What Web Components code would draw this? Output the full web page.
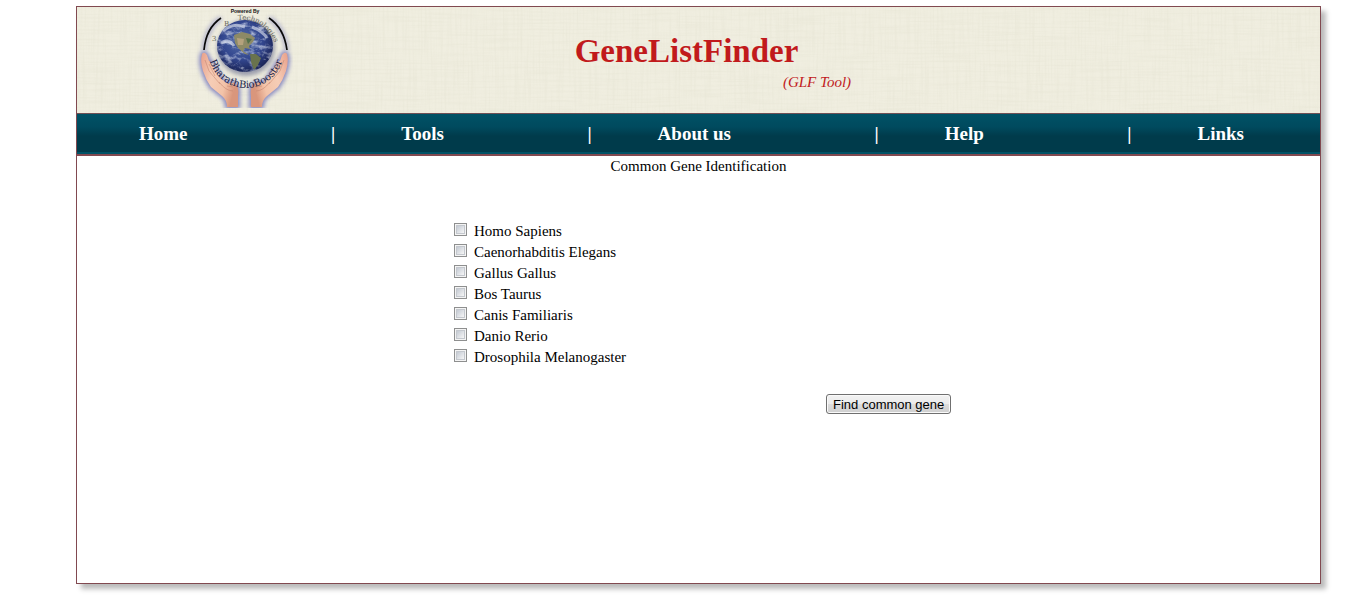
<!DOCTYPE html>
<html lang="en">
<head>
<meta charset="utf-8">
<title>GeneListFinder</title>
<style>
body { margin: 0; display: flow-root; min-height: 100vh; background: #fff; color: #000; font: 15px/21px "Liberation Serif", "Times New Roman", serif; }
</style>
</head>
<body>
<glf-frame>
  <glf-header slot="header"></glf-header>
  <glf-nav slot="nav"></glf-nav>
  <glf-form>
    <span slot="title">Common Gene Identification</span>
    <glf-option>Homo Sapiens</glf-option>
    <glf-option>Caenorhabditis Elegans</glf-option>
    <glf-option>Gallus Gallus</glf-option>
    <glf-option>Bos Taurus</glf-option>
    <glf-option>Canis Familiaris</glf-option>
    <glf-option>Danio Rerio</glf-option>
    <glf-option>Drosophila Melanogaster</glf-option>
  </glf-form>
</glf-frame>

<script>
function define(name, html) {
  customElements.define(name, class extends HTMLElement {
    constructor() {
      super();
      this.attachShadow({ mode: 'open' }).innerHTML = html;
    }
  });
}

define('glf-frame', `
<style>
:host { display: block; box-sizing: border-box; margin: 6px 44px 0 76px; min-height: calc(100vh - 35px);
  border: 1px solid #814950; background: #fff; box-shadow: 5px 5px 5px #bbb; }
</style>
<slot name="header"></slot><slot name="nav"></slot><main><slot></slot></main>`);

define('glf-logo', `
<style>:host { display: block; width: 98px; height: 101px; } svg { display: block; }</style>
<svg width="98" height="101" viewBox="195 7 98 101" role="img" aria-label="Bharath BioBooster">
  <defs>
    <radialGradient id="sea" cx=".45" cy=".4" r=".6">
      <stop offset="0" stop-color="#536da8"/><stop offset=".6" stop-color="#33478f"/><stop offset="1" stop-color="#1b2558"/>
    </radialGradient>
    <linearGradient id="skin" x1="0" x2="1" y1="0" y2=".4">
      <stop offset="0" stop-color="#e8a08a"/><stop offset=".4" stop-color="#f6cdb6"/><stop offset=".75" stop-color="#f3c3a8"/><stop offset="1" stop-color="#d9967c"/>
    </linearGradient>
    <filter id="glow" x="-30%" y="-30%" width="160%" height="160%"><feGaussianBlur stdDeviation="2"/></filter>
    <filter id="soft"><feGaussianBlur stdDeviation=".5"/></filter>
    <filter id="clouds" x="0" y="0" width="1" height="1">
      <feTurbulence type="fractalNoise" baseFrequency=".12 .2" numOctaves="4" seed="21"/>
      <feColorMatrix values="0 0 0 0 .8  0 0 0 0 .84  0 0 0 0 .93  3 0 0 0 -1.4"/>
    </filter>
    <clipPath id="disc"><ellipse cx="245" cy="46" rx="28" ry="26"/></clipPath>
    <path id="hand" d="M202 54Q204 51 207 55L209 61Q213 62 214 67L218 72Q220 78 224 81Q226 84 229 83Q234 81 237 86Q239 90 238 96V107H227Q227 100 222 96L211 87Q206 80 203 71Q200 61 202 54Z"/>
    <path id="low" d="M208 50A38 38 0 0 0 284 50"/>
    <path id="top" d="M238 20Q266 17 278 51"/>
  </defs>
  <g fill="#6064b6" stroke="#6064b6" stroke-width="4" opacity=".75" filter="url(#glow)">
    <use href="#hand"/><use href="#hand" transform="translate(489 0) scale(-1 1)"/>
  </g>
  <ellipse cx="246" cy="48" rx="29" ry="28" fill="#777b98" opacity=".7" filter="url(#glow)"/>
  <path d="M204 50Q206 28 221 18M269 18Q284 28 287 50" fill="none" stroke="#8a8cc0" stroke-width="5" opacity=".6" filter="url(#glow)"/>
  <path d="M204 50Q206 28 221 18M269 18Q284 28 287 50" fill="none" stroke="#090909" stroke-width="1.7"/>
  <ellipse cx="245" cy="46" rx="28" ry="26" fill="url(#sea)"/>
  <g clip-path="url(#disc)">
    <rect x="217" y="20" width="56" height="52" filter="url(#clouds)" opacity=".65"/>
    <g filter="url(#soft)">
      <path fill="#8d8a66" d="M234 35L242 32L250 34L255 38L253 42L249 46L250 49L245 48L243 51L249 55L245 54L238 48L235 43Z"/>
      <path fill="#69734d" d="M250 54L256 54L261 58L258 65L254 70L251 62Z"/>
      <path fill="#b5a27d" d="M237 38L244 39L243 45L238 45Z"/>
      <path fill="#527049" d="M246 38L252 39L248 44Z"/>
    </g>
    <path d="M223 31Q233 22 245 27M252 27Q262 31 267 38M221 43Q229 38 234 46" fill="none" stroke="#e4e9f4" stroke-width="3" opacity=".6" filter="url(#soft)"/>
  </g>
  <use href="#hand" fill="url(#skin)"/><use href="#hand" fill="url(#skin)" transform="translate(489 0) scale(-1 1)"/>
  <g fill="none" stroke="#c07e6a" stroke-width=".7" opacity=".7">
    <path id="lines" d="M205 60L209 71L220 84M209 64L215 76M219 82Q226 91 233 91M227 86L233 87"/>
    <use href="#lines" transform="translate(489 0) scale(-1 1)"/>
  </g>
  <text x="245" y="13" text-anchor="middle" font-family="Liberation Sans, sans-serif" font-weight="bold" font-size="5" fill="#111">Powered By</text>
  <g font-family="DejaVu Serif, serif" font-size="7" fill="#68685a">
    <text x="212" y="41">3</text><text x="224" y="26">B</text>
    <text><textPath href="#top">Technologies</textPath></text>
  </g>
  <text font-family="DejaVu Serif, serif" font-size="10" fill="#202449"><textPath href="#low" startOffset="50%" text-anchor="middle">BharathBioBooster</textPath></text>
</svg>`);

define('glf-header', `
<style>
:host { display: flex; position: relative; height: 106px; background: #f0eee0; color: #c11a1c; }
.linen { position: absolute; inset: 0; width: 100%; height: 100%; opacity: .45; }
glf-logo { position: relative; margin-left: 118px; }
.brand { position: relative; flex: 1; margin-right: 240px; padding-top: 24px; text-align: center; }
h1 { margin: 0; font-size: 33px; line-height: 41px; }
p { margin: 0; padding-left: 261px; font-style: italic; white-space: nowrap; }
</style>
<svg class="linen" aria-hidden="true">
  <filter id="warp" x="0" y="0" width="100%" height="100%">
    <feTurbulence type="fractalNoise" baseFrequency=".5 .02" numOctaves="2" seed="3"/>
    <feColorMatrix values="0 0 0 0 .72  0 0 0 0 .71  0 0 0 0 .58  1.2 0 0 0 -.5"/>
  </filter>
  <filter id="weft" x="0" y="0" width="100%" height="100%">
    <feTurbulence type="fractalNoise" baseFrequency=".02 .5" numOctaves="2" seed="5"/>
    <feColorMatrix values="0 0 0 0 .72  0 0 0 0 .71  0 0 0 0 .58  1.2 0 0 0 -.5"/>
  </filter>
  <rect width="100%" height="100%" filter="url(#warp)"/><rect width="100%" height="100%" filter="url(#weft)"/>
</svg>
<glf-logo></glf-logo>
<div class="brand"><h1>GeneListFinder</h1><p>(GLF Tool)</p></div>`);

define('glf-nav', `
<style>
:host { display: block; border-top: 1px solid #6f5055; border-bottom: 2px solid #814950; }
nav { display: flex; align-items: center; height: 40px; padding: 0 76px 2px 62px; box-sizing: border-box;
  background: linear-gradient(#005266 0, #004a5e 13px, #003b4b 22px, #003b4b 38px, #005266 38px);
  color: #fff; font-size: 19px; font-weight: bold; }
a { color: inherit; text-decoration: none; }
span { flex: 1; padding-right: 66px; text-align: right; }
</style>
<nav><a href="#home">Home</a><span>|</span><a href="#tools">Tools</a><span>|</span><a href="#about">About us</a><span>|</span><a href="#help">Help</a><span>|</span><a href="#links">Links</a></nav>`);

define('glf-option', `
<style>
:host { display: block; }
label { display: flex; align-items: center; gap: 7px; }
input { appearance: none; box-sizing: border-box; width: 13px; height: 13px; margin: 0 0 4px; border: 1px solid #8e8f8f;
  background: linear-gradient(135deg, #c4cad3, #f6f6f6) content-box, #f4f4f4; padding: 2px; box-shadow: inset 0 0 0 1px #f4f4f4, inset 0 0 0 2px #c4c8ce; }
input:checked { background: #4a5f97 content-box; }
</style>
<label><input type="checkbox"><span><slot></slot></span></label>`);

define('glf-form', `
<style>
:host { display: block; }
h2 { margin: 0; font-size: 15px; font-weight: normal; text-align: center; }
.options { padding: 44px 0 0 377px; }
.action { padding: 26px 0 0 749px; }
button { display: block; box-sizing: border-box; height: 20px; padding: 1px 6px 0; border: 1px solid #707070; border-radius: 3px;
  background: linear-gradient(#f2f2f2 0, #ebebeb 50%, #dddddd 50%, #cfcfcf); box-shadow: inset 0 0 0 1px #fafafa;
  color: #000; font: 13px/17px "Liberation Sans", Arial, sans-serif; white-space: nowrap; }
</style>
<form><h2><slot name="title"></slot></h2><div class="options"><slot></slot></div><div class="action"><button type="button">Find common gene</button></div></form>`);
</script>
</body>
</html>
